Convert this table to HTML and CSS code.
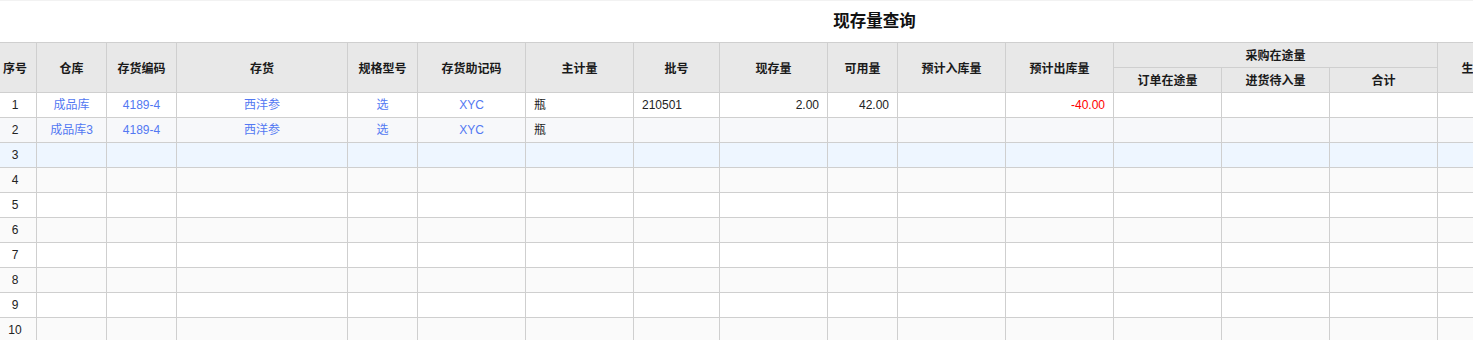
FILE: index.html
```html
<!DOCTYPE html>
<html lang="zh-CN">
<head>
<meta charset="utf-8">
<title>现存量查询</title>
<link rel="stylesheet" href="styles.css">
</head>
<body>
<div class="page">
  <div class="title-bar"><h1 class="title">现存量查询</h1></div>
  <div class="grid-wrap">
    <table class="grid">
      <colgroup>
        <col class="c-43"><col class="c-70"><col class="c-70"><col class="c-171"><col class="c-70"><col class="c-108"><col class="c-108"><col class="c-86"><col class="c-108"><col class="c-70"><col class="c-108"><col class="c-108"><col class="c-108"><col class="c-108"><col class="c-108"><col class="c-108"><col class="c-108">
      </colgroup>
      <thead>
        <tr>
          <th rowspan="2">序号</th>
          <th rowspan="2">仓库</th>
          <th rowspan="2">存货编码</th>
          <th rowspan="2">存货</th>
          <th rowspan="2">规格型号</th>
          <th rowspan="2">存货助记码</th>
          <th rowspan="2">主计量</th>
          <th rowspan="2">批号</th>
          <th rowspan="2">现存量</th>
          <th rowspan="2">可用量</th>
          <th rowspan="2">预计入库量</th>
          <th rowspan="2">预计出库量</th>
          <th colspan="3">采购在途量</th>
          <th rowspan="2">生产在途量</th>
          <th rowspan="2">委外在途量</th>
        </tr>
        <tr>
          <th>订单在途量</th>
          <th>进货待入量</th>
          <th>合计</th>
        </tr>
      </thead>
      <tbody>
        <tr class="r-white">
          <td class="num">1</td><td class="link">成品库</td><td class="link">4189-4</td><td class="link">西洋参</td><td class="link">选</td><td class="link">XYC</td><td class="left">瓶</td><td class="left">210501</td><td class="right">2.00</td><td class="right">42.00</td><td></td><td class="right neg">-40.00</td><td></td><td></td><td></td><td></td><td></td>
        </tr>
        <tr class="r-stripe2">
          <td class="num">2</td><td class="link">成品库3</td><td class="link">4189-4</td><td class="link">西洋参</td><td class="link">选</td><td class="link">XYC</td><td class="left">瓶</td><td></td><td></td><td></td><td></td><td></td><td></td><td></td><td></td><td></td><td></td>
        </tr>
        <tr class="r-hover">
          <td class="num">3</td><td></td><td></td><td></td><td></td><td></td><td></td><td></td><td></td><td></td><td></td><td></td><td></td><td></td><td></td><td></td><td></td>
        </tr>
        <tr class="r-stripe">
          <td class="num">4</td><td></td><td></td><td></td><td></td><td></td><td></td><td></td><td></td><td></td><td></td><td></td><td></td><td></td><td></td><td></td><td></td>
        </tr>
        <tr class="r-white">
          <td class="num">5</td><td></td><td></td><td></td><td></td><td></td><td></td><td></td><td></td><td></td><td></td><td></td><td></td><td></td><td></td><td></td><td></td>
        </tr>
        <tr class="r-stripe">
          <td class="num">6</td><td></td><td></td><td></td><td></td><td></td><td></td><td></td><td></td><td></td><td></td><td></td><td></td><td></td><td></td><td></td><td></td>
        </tr>
        <tr class="r-white">
          <td class="num">7</td><td></td><td></td><td></td><td></td><td></td><td></td><td></td><td></td><td></td><td></td><td></td><td></td><td></td><td></td><td></td><td></td>
        </tr>
        <tr class="r-stripe">
          <td class="num">8</td><td></td><td></td><td></td><td></td><td></td><td></td><td></td><td></td><td></td><td></td><td></td><td></td><td></td><td></td><td></td><td></td>
        </tr>
        <tr class="r-white">
          <td class="num">9</td><td></td><td></td><td></td><td></td><td></td><td></td><td></td><td></td><td></td><td></td><td></td><td></td><td></td><td></td><td></td><td></td>
        </tr>
        <tr class="r-stripe">
          <td class="num">10</td><td></td><td></td><td></td><td></td><td></td><td></td><td></td><td></td><td></td><td></td><td></td><td></td><td></td><td></td><td></td><td></td>
        </tr>
      </tbody>
    </table>
  </div>
</div>
</body>
</html>
```

FILE: styles.css
```css
html, body {
  margin: 0;
  padding: 0;
  background: #ffffff;
}

body {
  font-family: "Liberation Sans", "Noto Sans CJK SC", Arial, sans-serif;
  font-size: 12px;
  color: #222;
  overflow: hidden;
}

.page {
  width: 1473px;
  height: 340px;
  overflow: hidden;
  border-top: 1px solid #f2f2f2;
  box-sizing: border-box;
}

.title-bar {
  height: 41px;
  display: flex;
  align-items: center;
  justify-content: center;
  padding-left: 276px;
  box-sizing: border-box;
}

.title {
  margin: 0 0 4px 0;
  font-size: 16.5px;
  font-weight: bold;
  color: #111;
  line-height: 20px;
  font-family: "Noto Sans CJK SC", "Liberation Sans", sans-serif;
}

.grid-wrap {
  overflow: hidden;
  width: 1473px;
}

.grid {
  border-collapse: collapse;
  table-layout: fixed;
  width: 1660px;
  margin-left: -7px;
}

.c-43 { width: 43px; }
.c-70 { width: 70px; }
.c-86 { width: 86px; }
.c-108 { width: 108px; }
.c-171 { width: 171px; }

.grid th,
.grid td {
  border: 1px solid #cfcfcf;
  height: 25px;
  padding: 0 8px;
  box-sizing: border-box;
  white-space: nowrap;
  overflow: hidden;
  line-height: 16px;
}

.grid th {
  background: #e8e8e8;
  font-weight: bold;
  color: #1a1a1a;
  text-align: center;
  font-family: "Noto Sans CJK SC", "Liberation Sans", sans-serif;
}

.grid td {
  text-align: center;
}

.grid td.num {
  padding: 0;
  color: #222;
}

.grid td.link {
  color: #5378f2;
}

.grid td.left {
  text-align: left;
  color: #222;
}

.grid td.right {
  text-align: right;
  color: #222;
}

.grid td.neg {
  color: #ff0000;
}

.r-white td { background: #ffffff; }
.r-stripe td { background: #fafafa; }
.r-stripe2 td { background: #f7f8fa; }
.r-hover td { background: #eef6ff; }
```
